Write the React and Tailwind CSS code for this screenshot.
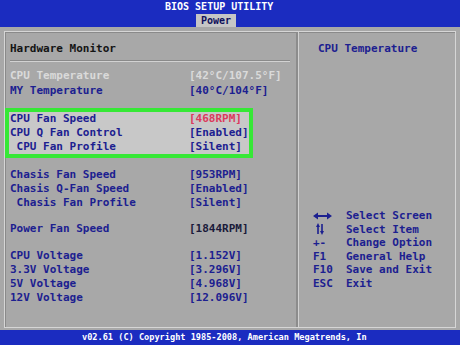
import React from 'react';

const mono = { fontFamily: '"DejaVu Sans Mono", "Liberation Mono", monospace' };

const Row = ({ label, value, indent, labelClass = 'text-[#1c2090]', valueClass = 'text-[#1c2090]' }) => (
  <div className="flex h-[14px] items-center leading-[14px]">
    <span className={`w-[179px] shrink-0 whitespace-pre ${labelClass}`}>{indent ? ' ' + label : label}</span>
    <span className={`whitespace-pre ${valueClass}`}>{value}</span>
  </div>
);

const LeftRight = () => (
  <svg width="19" height="8" viewBox="0 0 19 8">
    <path d="M0 4 L5 0.5 L5 7.5 Z M19 4 L14 0.5 L14 7.5 Z" fill="#1c2090" />
    <rect x="4" y="3" width="11" height="2" fill="#1c2090" />
  </svg>
);

const UpDown = () => (
  <svg width="8" height="12" viewBox="0 0 8 12">
    <path d="M2 0 L4 4 L0 4 Z M6 12 L8 8 L4 8 Z" fill="#1c2090" />
    <rect x="1.2" y="3" width="1.6" height="8" fill="#1c2090" />
    <rect x="5.2" y="1" width="1.6" height="8" fill="#1c2090" />
  </svg>
);

const keys = [
  { key: <LeftRight />, desc: 'Select Screen' },
  { key: <span className="pl-[3px]"><UpDown /></span>, desc: 'Select Item' },
  { key: '+-', desc: 'Change Option' },
  { key: 'F1', desc: 'General Help' },
  { key: 'F10', desc: 'Save and Exit' },
  { key: 'ESC', desc: 'Exit' },
];

export default function App() {
  return (
    <div className="flex h-[345px] w-[460px] flex-col overflow-hidden bg-[#a8a8a8] text-[11px] font-bold" style={mono}>
      {/* header */}
      <div className="h-[27px] shrink-0 bg-[#1b2cc0]">
        <div className="h-[14px] pl-[165px] text-[10px] leading-[14px] text-white">BIOS SETUP UTILITY</div>
        <div className="pl-[196px]">
          <div className="h-[13px] w-[40px] bg-[#c6c6c6] text-center text-[10px] leading-[13px] text-[#10105a]">Power</div>
        </div>
      </div>

      {/* main frame */}
      <div className="flex-1 px-[4px] pb-[2px] pt-[4px]">
        <div className="flex h-full border border-[#d6d6d6] shadow-[inset_1px_1px_0_#8a8a8a]">
          {/* left panel */}
          <div className="w-[293px] shrink-0 border-r-2 border-r-[#8c8c8c] pt-[10px]">
            <div className="h-[14px] pl-[5px] leading-[14px] text-[#141414]">Hardware Monitor</div>
            <div className="mr-[6px] ml-[5px] mt-[5px] border-t border-t-[#d2d2d2] shadow-[0_-1px_0_#8a8a8a]" />
            <div className="pl-[5px] pt-[7px]">
              <Row label="CPU Temperature" value="[42°C/107.5°F]" labelClass="text-[#dadada]" valueClass="text-[#dadada]" />
              <div className="mt-[1px]">
                <Row label="MY Temperature" value="[40°C/104°F]" />
              </div>
            </div>

            <div className="mt-[10px] w-[248px] border-[4px] border-[#36e836] bg-[#c8c8c8] pl-[1px]">
              <Row label="CPU Fan Speed" value="[468RPM]" valueClass="text-[#dc3a5c]" />
              <Row label="CPU Q Fan Control" value="[Enabled]" />
              <Row label="CPU Fan Profile" value="[Silent]" indent />
            </div>

            <div className="pl-[5px] pt-[10px]">
              <Row label="Chasis Fan Speed" value="[953RPM]" />
              <Row label="Chasis Q-Fan Speed" value="[Enabled]" />
              <Row label="Chasis Fan Profile" value="[Silent]" indent />
            </div>

            <div className="pl-[5px] pt-[12px]">
              <Row label="Power Fan Speed" value="[1844RPM]" valueClass="text-[#1a1a3a]" />
            </div>

            <div className="pl-[5px] pt-[13px]">
              <Row label="CPU Voltage" value="[1.152V]" />
              <Row label="3.3V Voltage" value="[3.296V]" />
              <Row label="5V Voltage" value="[4.968V]" />
              <Row label="12V Voltage" value="[12.096V]" />
            </div>
          </div>

          {/* right panel */}
          <div className="flex flex-1 flex-col border-l border-l-[#d2d2d2] pl-[19px] pt-[10px]">
            <div className="h-[14px] leading-[14px] text-[#1c2090]">CPU Temperature</div>
            <div className="mt-[153px] -ml-[5px]">
              {keys.map((k, i) => (
                <div key={i} className="flex h-[13.6px] items-center leading-[13.6px] text-[#1c2090]">
                  <span className="flex w-[33px] shrink-0 items-center">{k.key}</span>
                  <span className="whitespace-pre">{k.desc}</span>
                </div>
              ))}
            </div>
          </div>
        </div>
      </div>

      {/* footer */}
      <div className="h-[15px] shrink-0 bg-[#1b2cc0] pl-[82px] text-[8.6px] leading-[15px] text-white whitespace-pre">
        v02.61 (C) Copyright 1985-2008, American Megatrends, In
      </div>
    </div>
  );
}
